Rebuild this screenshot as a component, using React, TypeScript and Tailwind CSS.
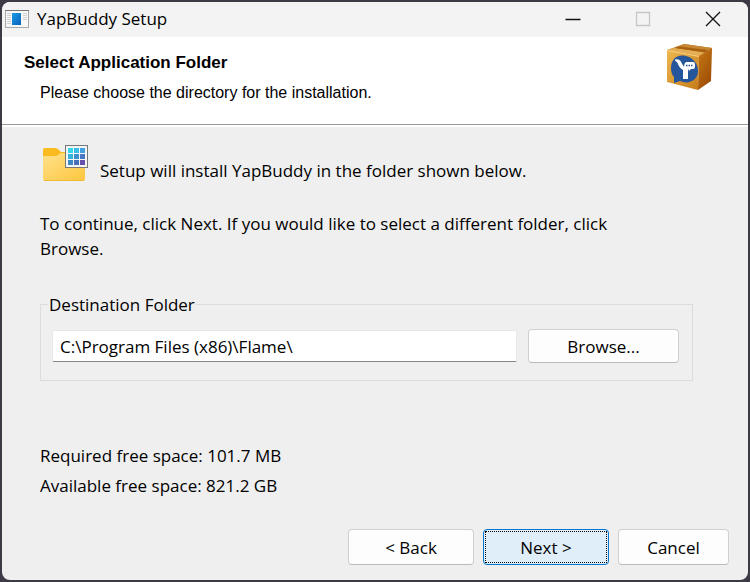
import type { ButtonHTMLAttributes } from "react";

function WindowIcon() {
  return (
    <svg width="24" height="18" viewBox="0 0 24 18" aria-hidden="true">
      <defs>
        <linearGradient id="pane" x1="0" y1="0" x2="1" y2="1">
          <stop offset="0" stopColor="#1a9be8" />
          <stop offset="1" stopColor="#0a63b8" />
        </linearGradient>
      </defs>
      <rect x="0.5" y="0.5" width="23" height="17" fill="#f8f8f8" stroke="#a8a8a8" />
      <path d="M0 0.5h24" stroke="#777" />
      <path d="M2 3.5h4M2 5.5h4M2 7.5h4M2 9.5h4M2 11.5h4M2 13.5h4M18 3.5h4M18 5.5h4M18 7.5h4M18 9.5h4" stroke="#d0d0d0" />
      <rect x="7" y="3" width="9" height="12" fill="url(#pane)" />
    </svg>
  );
}

function PackageLogo() {
  return (
    <svg width="48" height="48" viewBox="0 0 48 48" aria-hidden="true">
      <defs>
        <linearGradient id="front" x1="0" y1="0" x2="1" y2="1">
          <stop offset="0" stopColor="#eeb750" />
          <stop offset="1" stopColor="#c67c1b" />
        </linearGradient>
        <linearGradient id="side" x1="0" y1="0" x2="0.6" y2="1">
          <stop offset="0" stopColor="#c97a16" />
          <stop offset="1" stopColor="#9c4d05" />
        </linearGradient>
        <linearGradient id="lid" x1="0" y1="0" x2="1" y2="0">
          <stop offset="0" stopColor="#c98328" />
          <stop offset="1" stopColor="#a8630f" />
        </linearGradient>
      </defs>
      <path d="M1 7 18 1 46 5 33 13z" fill="url(#lid)" />
      <path d="M1 7 8 5 39 9 33 13z" fill="#e5ae55" />
      <path d="M12 3.5 42 7.5 39 9.5 9 5z" fill="#a6600f" />
      <path d="M18 1 46 5 42 7 13 3z" fill="#c98835" />
      <path d="M1 7 33 13 32 47 1 39z" fill="url(#front)" />
      <path d="M33 13 46 5 45 38 32 47z" fill="url(#side)" />
      <path d="M1 7.5 33 13.5" stroke="#f8d07a" fill="none" />
      <path d="M18 12.5C10 11.5 5 17 5 25c0 4 1 7 3 9v6l6-2c9 4 18-1 18-10 0-8-6-14.500-14-15.500z" fill="#25559b" />
      <path
        d="M9 16.500q4-1 5.500 1.500l3.500 6c0-3 1-5 3-5h6q2 0 2 2v3q0 2-2 2h-2l-2 2v-2c-1 1-1 2-1 4v6h-5v-9c-2-1-4-3-5-6-1-3-3-2-3-4.500z"
        fill="#fff"
      />
      <path d="M20 22.500h1.500M22.500 22.500H24M25 22.500h1.500" stroke="#25559b" strokeWidth="1.5" />
    </svg>
  );
}

function FolderIcon() {
  const cells = [
    ["#37d5e8", "#36bde8", "#3f9fe0"],
    ["#35b5dc", "#3b91cf", "#4878c5"],
    ["#3b88c4", "#4870b9", "#6650ad"],
  ];
  return (
    <svg width="48" height="36" viewBox="0 0 48 36" aria-hidden="true">
      <defs>
        <linearGradient id="folder" x1="0" y1="0" x2="1" y2="1">
          <stop offset="0" stopColor="#ffe18b" />
          <stop offset="1" stopColor="#fdc63e" />
        </linearGradient>
      </defs>
      <path d="M3 5q0-2 2-2h10q2 0 4 2l2 2h24v10H3z" fill="#f9bb1d" />
      <path d="M3 11h12q2 0 3-1l3-2h24v26q0 2-2 2H5q-2 0-2-2z" fill="url(#folder)" />
      <path d="M4 35.5h40" stroke="#efb934" />
      <rect x="25.5" y="0.5" width="22" height="22" fill="#f6f6f6" stroke="#777" />
      {cells.map((row, y) =>
        row.map((fill, x) => (
          <rect key={fill} x={28 + x * 6} y={3 + y * 6} width="5" height="5" fill={fill} />
        )),
      )}
    </svg>
  );
}

function CaptionButton({ label, path, muted }: { label: string; path: string; muted?: boolean }) {
  return (
    <button
      type="button"
      aria-label={label}
      disabled={muted}
      className={`flex h-8 w-[70px] items-center justify-center ${muted ? "text-[#c6c6c6]" : "text-[#111111]"}`}
    >
      <svg width="16" height="16" viewBox="0 0 16 16" fill="none" stroke="currentColor">
        <path d={path} strokeWidth="1.3" />
      </svg>
    </button>
  );
}

function DialogButton({ className = "", ...props }: ButtonHTMLAttributes<HTMLButtonElement>) {
  return (
    <button
      type="button"
      className={`rounded border border-[#d0d0d0] border-b-[#bcbcbc] bg-[#fdfdfd] text-center ${className}`}
      {...props}
    />
  );
}

export default function App() {
  return (
    <div className="flex min-h-screen flex-col bg-[#3d3a45] p-0.5 font-['Open_Sans','Noto_Sans',sans-serif] text-[17px] leading-[25px] text-black">
      <main className="flex grow flex-col overflow-hidden rounded-lg bg-[#efefef]">
        <header className="flex h-[35px] items-center bg-[#f3f3f3] pb-0.5 pl-[3px]">
          <WindowIcon />
          <h1 className="ml-2 grow">YapBuddy Setup</h1>
          <CaptionButton label="Minimize" path="M0.5 8.5h15" />
          <CaptionButton label="Maximize" path="M1.5 1.5h13v13h-13z" muted />
          <CaptionButton label="Close" path="M1 1l14 14M15 1L1 15" />
        </header>

        <section className="flex h-[88px] justify-between border-b border-[#999999] bg-white pr-[34px] pl-[22px] pt-1.5 font-['Liberation_Sans',Arial,sans-serif] leading-5 shadow-[0_2px_0_white]">
          <div className="pt-2.5">
            <h2 className="font-bold">Select Application Folder</h2>
            <p className="mt-2.5 pl-4 text-base leading-5">
              Please choose the directory for the installation.
            </p>
          </div>
          <PackageLogo />
        </section>

        <section className="flex grow flex-col pt-5 pr-[55px] pl-[38px]">
          <div className="flex items-end gap-3">
            <FolderIcon />
            <p className="-mb-0.5">Setup will install YapBuddy in the folder shown below.</p>
          </div>
          <p className="mt-[30px] max-w-[600px]">
            To continue, click Next. If you would like to select a different folder, click Browse.
          </p>

          <fieldset className="mt-[31px] flex items-center gap-[11px] border border-[#dcdcdc] pt-3 pr-[13px] pb-[17px] pl-[11px]">
            <legend className="-ml-1">
              <label htmlFor="destination" className="px-px">
                Destination Folder
              </label>
            </legend>
            <input
              id="destination"
              type="text"
              defaultValue={"C:\\Program Files (x86)\\Flame\\"}
              className="h-8 min-w-0 grow rounded-xs border border-[#e8e8e8] border-b-[#858585] bg-white px-[7px] outline-none"
            />
            <DialogButton className="h-[34px] w-[151px]">Browse...</DialogButton>
          </fieldset>

          <div className="mt-[62px] flex flex-col gap-[5px]">
            <p>Required free space: 101.7 MB</p>
            <p>Available free space: 821.2 GB</p>
          </div>
        </section>

        <footer className="flex justify-end gap-[9px] pr-[19px] pb-[15px]">
          <DialogButton className="h-9 w-[126px]">&lt; Back</DialogButton>
          <button
            type="button"
            className="h-9 w-[126px] rounded border border-[#0078d4] bg-[#e0eef9] p-px"
          >
            <span className="flex h-full items-center justify-center border border-dotted border-black">
              Next &gt;
            </span>
          </button>
          <DialogButton className="h-9 w-[111px]">Cancel</DialogButton>
        </footer>
      </main>
    </div>
  );
}
